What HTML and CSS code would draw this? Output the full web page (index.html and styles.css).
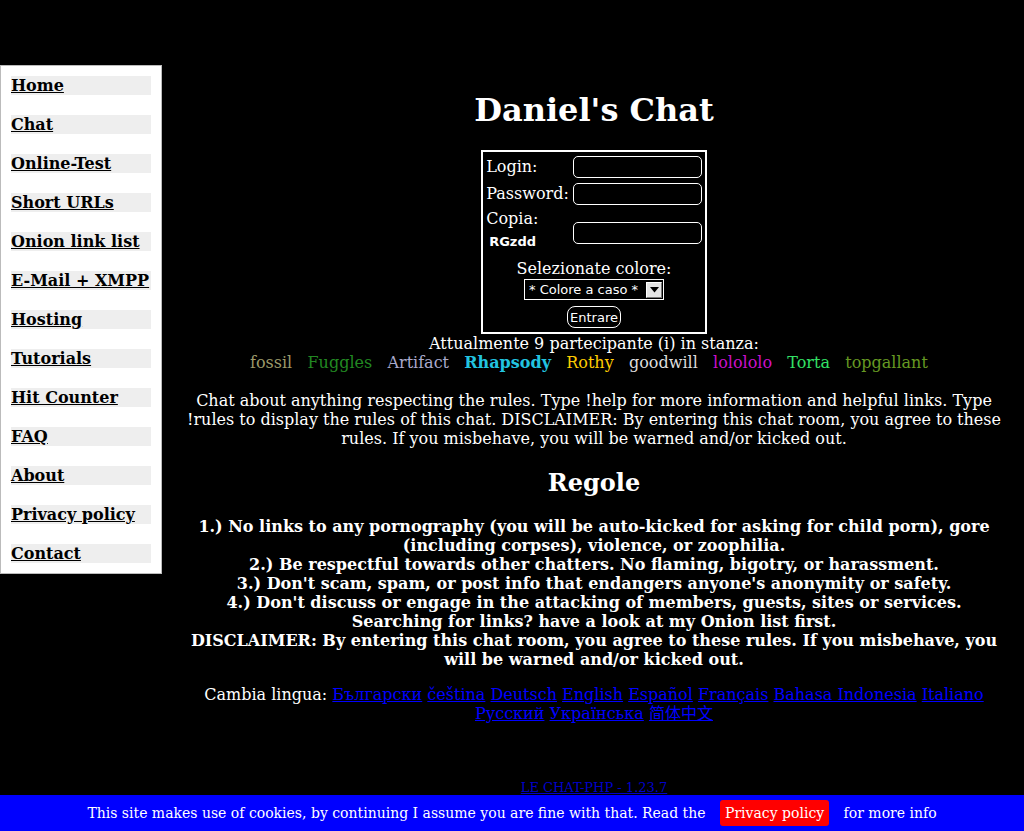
FILE: index.html
```html
<!DOCTYPE html>
<html lang="it">
<head>
<meta charset="utf-8">
<title>Daniel's Chat</title>
<link rel="stylesheet" href="styles.css">
</head>
<body>
<div class="layout">
  <nav class="sidebar">
    <a class="navlink" href="#">Home</a>
    <a class="navlink" href="#">Chat</a>
    <a class="navlink" href="#">Online-Test</a>
    <a class="navlink" href="#">Short URLs</a>
    <a class="navlink" href="#">Onion link list</a>
    <a class="navlink" href="#">E-Mail + XMPP</a>
    <a class="navlink" href="#">Hosting</a>
    <a class="navlink" href="#">Tutorials</a>
    <a class="navlink" href="#">Hit Counter</a>
    <a class="navlink" href="#">FAQ</a>
    <a class="navlink" href="#">About</a>
    <a class="navlink" href="#">Privacy policy</a>
    <a class="navlink" href="#">Contact</a>
  </nav>
  <main class="main">
    <h1 class="title">Daniel's Chat</h1>
    <form class="loginform">
      <table class="login">
        <tr><td class="label">Login:</td><td><input class="field" type="text"></td></tr>
        <tr><td class="label">Password:</td><td><input class="field" type="password"></td></tr>
        <tr><td class="label">Copia:<br><span class="captcha">RGzdd</span></td><td><input class="field" type="text"></td></tr>
        <tr><td colspan="2" class="center">Selezionate colore:<br><span class="selectbox"><span class="selecttext">* Colore a caso *</span><span class="selectarrow"><svg width="9" height="6" viewBox="0 0 9 6"><path d="M0 0H9L4.5 5.5Z" fill="#000"/></svg></span></span></td></tr>
        <tr><td colspan="2" class="center"><button class="enter" type="button">Entrare</button></td></tr>
      </table>
    </form>
    <div class="present">Attualmente 9 partecipante (i) in stanza:</div>
    <div class="nicks"><span class="n1">fossil</span>&nbsp;&nbsp; <span class="n2">Fuggles</span>&nbsp;&nbsp; <span class="n3">Artifact</span>&nbsp;&nbsp; <span class="n4">Rhapsody</span>&nbsp;&nbsp; <span class="n5">Rothy</span>&nbsp;&nbsp; <span class="n6">goodwill</span>&nbsp;&nbsp; <span class="n7">lolololo</span>&nbsp;&nbsp; <span class="n8">Torta</span>&nbsp;&nbsp; <span class="n9">topgallant</span>&nbsp;&nbsp; </div>
    <p class="desc">Chat about anything respecting the rules. Type !help for more information and helpful links. Type !rules to display the rules of this chat. DISCLAIMER: By entering this chat room, you agree to these rules. If you misbehave, you will be warned and/or kicked out.</p>
    <h2 class="rulestitle">Regole</h2>
    <div class="rules">1.) No links to any pornography (you will be auto-kicked for asking for child porn), gore (including corpses), violence, or zoophilia.<br>2.) Be respectful towards other chatters. No flaming, bigotry, or harassment.<br>3.) Don't scam, spam, or post info that endangers anyone's anonymity or safety.<br>4.) Don't discuss or engage in the attacking of members, guests, sites or services.<br>Searching for links? have a look at my Onion list first.<br>DISCLAIMER: By entering this chat room, you agree to these rules. If you misbehave, you will be warned and/or kicked out.</div>
    <p class="langs">Cambia lingua: <a href="#">Български</a> <a href="#">čeština</a> <a href="#">Deutsch</a> <a href="#">English</a> <a href="#">Español</a> <a href="#">Français</a> <a href="#">Bahasa Indonesia</a> <a href="#">Italiano</a> <a href="#">Русский</a> <a href="#">Українська</a> <a href="#">简体中文</a></p>
    <div class="version"><a href="#">LE CHAT-PHP - 1.23.7</a></div>
  </main>
</div>
<div class="cookiebar">This site makes use of cookies, by continuing I assume you are fine with that. Read the <a class="cookielink" href="#">Privacy policy</a> for more info</div>
</body>
</html>
```

FILE: styles.css
```css
html, body {
  margin: 0;
  padding: 0;
  background: #000;
}
body {
  color: #fff;
  font-family: "DejaVu Serif", "Noto Sans CJK SC", serif;
  font-size: 16px;
}
.layout {
  display: flex;
  align-items: flex-start;
}
.sidebar {
  flex: 0 0 auto;
  width: 140px;
  margin-top: 65px;
  padding: 10px;
  background: #fff;
  border: 1px solid #bbb;
  display: flex;
  flex-direction: column;
  gap: 20px;
}
.navlink {
  display: block;
  background: #eee;
  color: #000;
  font-weight: bold;
  line-height: 19px;
  text-decoration: underline;
}
.main {
  flex: 1 1 auto;
  padding: 70px 14px 0 16px;
  text-align: center;
}
.title {
  font-size: 32px;
  margin: 21px 0;
}
.login {
  margin: 0 auto;
  border: 2px solid #fff;
  border-spacing: 2px;
  text-align: left;
}
.login td {
  padding: 1px;
  vertical-align: middle;
}
.login .center {
  text-align: center;
}
.field {
  display: block;
  width: 129px;
  height: 22px;
  margin: 1px 0 0;
  box-sizing: border-box;
  background: #000;
  color: #fff;
  border: 1px solid #fff;
  border-radius: 5px;
  padding: 1px 4px;
  font-family: "DejaVu Sans", sans-serif;
  font-size: 13px;
}
.captcha {
  display: inline-block;
  height: 27px;
  line-height: 27px;
  padding: 0 3px;
  font-family: "DejaVu Sans", sans-serif;
  font-size: 13px;
  font-weight: bold;
  color: #fff;
  vertical-align: top;
}
.selectbox {
  display: inline-flex;
  align-items: center;
  height: 21px;
  width: 140px;
  margin: 1px 0;
  box-sizing: border-box;
  border: 1px solid #fff;
  vertical-align: middle;
  font-family: "DejaVu Sans", sans-serif;
  font-size: 13px;
}
.selecttext {
  flex: 1 1 auto;
  text-align: left;
  padding-left: 4px;
  line-height: 16px;
}
.selectarrow {
  flex: 0 0 auto;
  width: 16px;
  height: 16px;
  margin-right: 1px;
  background: #e4e4e4;
  border: 1px solid #fff;
  border-right-color: #777;
  border-bottom-color: #777;
  box-sizing: border-box;
  display: flex;
  align-items: center;
  justify-content: center;
}
.enter {
  display: inline-block;
  height: 22px;
  margin: 1px 0;
  padding: 0 2px;
  background: #000;
  color: #fff;
  border: 1px solid #fff;
  border-radius: 8px;
  font-family: "DejaVu Sans", sans-serif;
  font-size: 13px;
  vertical-align: middle;
}
.present, .nicks {
  line-height: 19px;
}
.n1 { color: #9c9a6a; }
.n2 { color: #228822; }
.n3 { color: #aaaacc; }
.n4 { color: #22c4e0; font-weight: bold; }
.n5 { color: #ffcc00; }
.n6 { color: #dddddd; }
.n7 { color: #cc11cc; }
.n8 { color: #33e066; }
.n9 { color: #669922; }
.desc {
  margin: 19px 0 0;
  line-height: 19px;
}
.rulestitle {
  font-size: 24px;
  margin: 20px 0;
}
.rules {
  font-weight: bold;
  line-height: 19px;
}
.langs {
  margin: 16px 0 0;
  line-height: 19px;
}
.langs a {
  color: #0000ff;
}
.version {
  margin-top: 57px;
  font-size: 13px;
  padding-bottom: 40px;
}
.version a {
  color: #0000cc;
}
.cookiebar {
  position: fixed;
  left: 0;
  right: 0;
  bottom: 0;
  height: 36px;
  background: #0000ff;
  color: #fff;
  text-align: center;
  line-height: 36px;
  font-size: 14px;
}
.cookielink {
  display: inline-block;
  margin: 0 10px;
  padding: 0 5px;
  line-height: 26px;
  background: #ff0000;
  color: #fff;
  border-radius: 3px;
  text-decoration: none;
}
```
